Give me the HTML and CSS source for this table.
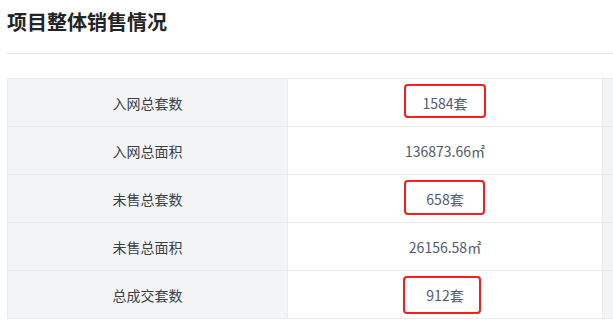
FILE: index.html
```html
<!DOCTYPE html>
<html lang="zh-CN">
<head>
<meta charset="utf-8">
<title>项目整体销售情况</title>
<link rel="stylesheet" href="styles.css">
</head>
<body>
<div class="page">
  <div class="header">
    <h1 class="title">项目整体销售情况</h1>
  </div>
  <div class="table-wrap">
    <table class="info">
      <colgroup>
        <col class="c-label">
        <col class="c-value">
        <col class="c-extra">
      </colgroup>
      <tr>
        <td class="label">入网总套数</td>
        <td class="value"><span>1584套</span><i class="mark m1"></i></td>
        <td class="extra"></td>
      </tr>
      <tr>
        <td class="label">入网总面积</td>
        <td class="value"><span>136873.66㎡</span></td>
        <td class="extra"></td>
      </tr>
      <tr>
        <td class="label">未售总套数</td>
        <td class="value"><span>658套</span><i class="mark m2"></i></td>
        <td class="extra"></td>
      </tr>
      <tr>
        <td class="label">未售总面积</td>
        <td class="value"><span>26156.58㎡</span></td>
        <td class="extra"></td>
      </tr>
      <tr>
        <td class="label">总成交套数</td>
        <td class="value"><span>912套</span><i class="mark m3"></i></td>
        <td class="extra"></td>
      </tr>
    </table>
  </div>
</div>
</body>
</html>
```
FILE: styles.css
```css
html, body {
  margin: 0;
  padding: 0;
  background: #ffffff;
  overflow: hidden;
}
body {
  font-family: "Noto Sans CJK SC", "Noto Sans", sans-serif;
  color: #515a6e;
}
.page {
  width: 613px;
  height: 328px;
  overflow: hidden;
  padding-left: 7px;
  box-sizing: border-box;
}
.header {
  padding-top: 8px;
  padding-bottom: 17px;
  border-bottom: 1px solid #e3e4e6;
}
.title {
  margin: 0;
  font-size: 20px;
  line-height: 28px;
  font-weight: 700;
  color: #222428;
}
.table-wrap {
  margin-top: 24px;
  width: 800px;
}
.info {
  border-collapse: collapse;
  table-layout: fixed;
  width: 796px;
}
.c-label { width: 280px; }
.c-value { width: 315px; }
.c-extra { width: 201px; }
.info td {
  border: 1px solid #e8eaec;
  height: 48px;
  padding: 0;
  box-sizing: border-box;
  text-align: center;
  font-size: 14px;
  line-height: 20px;
}
.label {
  background: #f3f4f6;
  color: #3a3e47;
}
.value {
  position: relative;
  background: #ffffff;
  color: #515a6e;
}
.extra {
  background: #f3f4f6;
}
.mark {
  position: absolute;
  top: 5px;
  border: 2px solid #f51d1d;
  border-radius: 4px;
  box-sizing: border-box;
}
.m1 { left: 116px; width: 82px; height: 34px; }
.m2 { left: 116px; width: 81px; height: 35px; }
.m3 { left: 115px; width: 78px; height: 38px; }
```
